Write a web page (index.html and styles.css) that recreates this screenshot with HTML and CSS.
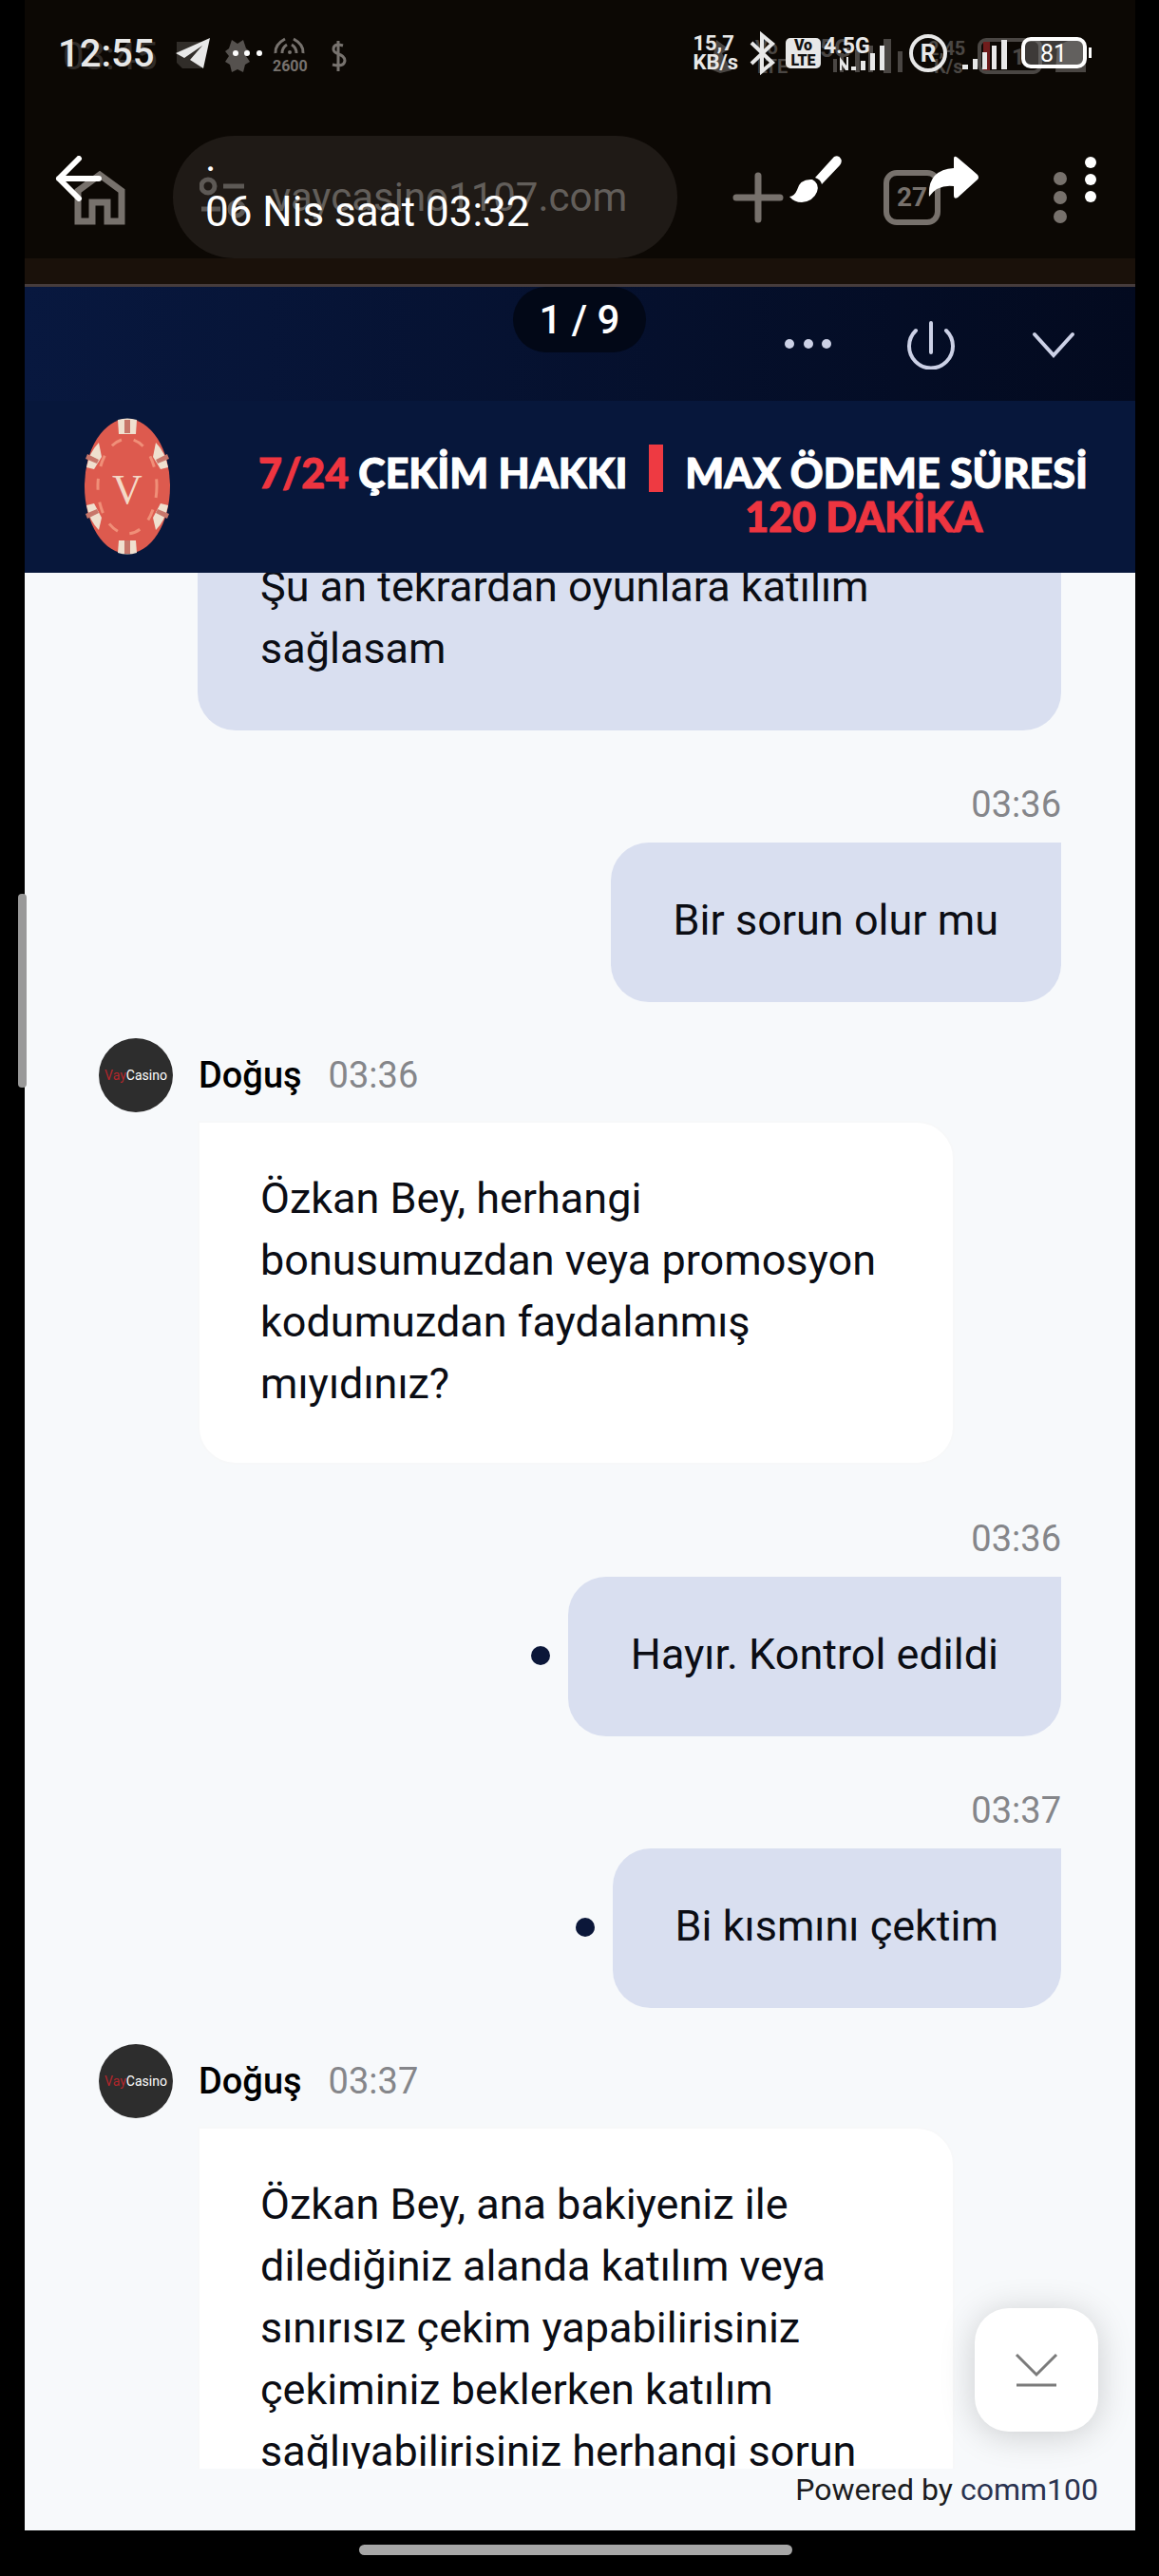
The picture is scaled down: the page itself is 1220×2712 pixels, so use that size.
FILE: index.html
```html
<!DOCTYPE html>
<html lang="tr">
  <head>
    <meta charset="UTF-8" />
    <meta name="viewport" content="width=device-width, initial-scale=1.0" />
    <title>06 Nis saat 03:32</title>
    <link rel="stylesheet" href="styles.css">
  </head>
  <body>
    <div class="photo">
      <!-- browser bar inside the photo -->
      <div class="browser">
        <div class="old-status">
          <svg width="340" height="60" viewBox="0 0 340 60" fill="#55514e">
            <text x="14" y="45" font-size="40" opacity="0.5">03:45</text>
            <path d="M134 16h26v28h-20l-6-6z" opacity="0.5" />
            <path d="M192 14l6 4 6-4 3 9 4 3-4 5 4 6-5 3-2 8-6-3-6 3-2-8-5-3 4-6-4-5 4-3z" />
            <g fill="none" stroke="#77726e" stroke-width="3">
              <path d="M238 28q-1-9 10-15M245 28q0-6 5-9M267 28q1-9-10-15M260 28q0-6-5-9" />
              <path d="M304 15v32M309 20q-10-3-10 4c0 6 12 4 12 12q-1 7-13 4" />
            </g>
            <circle cx="253" cy="27" r="2" fill="#77726e" />
            <text x="235" y="47" font-size="16" font-weight="700" fill="#77726e">2600</text>
          </svg>
          <svg width="440" height="60" viewBox="0 0 440 60" fill="#4a4643">
            <path d="M37 14l14 10-8 4 10 18-12 3-10-4z" />
            <text x="78" y="29" font-size="20" font-weight="700">Vo</text>
            <text x="80" y="49" font-size="20" font-weight="700">LTE</text>
            <text x="146" y="32" font-size="26" font-weight="700">5G</text>
            <path d="M160 34h4v14h-4zM167 28h4v20h-4zM183 24h5v24h-5zM197 20h5v28h-5zM213 13h8v36h-8zM228 26h5v22h-5z" />
            <text x="260" y="30" font-size="20" font-weight="700">2,45</text>
            <text x="266" y="49" font-size="20" font-weight="700">K/s</text>
            <rect x="314" y="14" width="64" height="34" rx="7" fill="none" stroke="#4a4643" stroke-width="4" />
            <path d="M318 16h7v30h-7z" fill="#701c1c" />
            <text x="348" y="40" font-size="24" font-weight="700">1</text>
            <path d="M396 20l18-8 12 6v30h-32z" />
          </svg>
        </div>
        <div class="address-row">
          <button class="ghost-btn" aria-label="Ana sayfa">
            <svg width="54" height="60" viewBox="0 0 54 60" fill="none" stroke="#77716c" stroke-width="7">
              <path d="M4 23L27 6l23 17v32H35V35H19v20H4z" />
            </svg>
          </button>
          <div class="address">
            <svg width="48" height="44" viewBox="0 0 48 44" fill="none" stroke="#5d5955" stroke-width="5">
              <circle cx="9" cy="10" r="7" />
              <path d="M25 10h22M2 34h20" />
              <circle cx="39" cy="34" r="7" />
            </svg>
            <span>vaycasino1107.com</span>
          </div>
          <button class="ghost-btn plus" aria-label="Yeni sekme">
            <svg width="54" height="54" viewBox="0 0 54 54" stroke="#77716c" stroke-width="7" stroke-linecap="round">
              <path d="M27 4v46M4 27h46" />
            </svg>
          </button>
          <button class="ghost-btn tabs">27</button>
          <button class="ghost-btn" aria-label="Menü">
            <svg width="16" height="54" viewBox="0 0 16 54" fill="#77716c">
              <circle cx="8" cy="7" r="7" /><circle cx="8" cy="27" r="7" /><circle cx="8" cy="47" r="7" />
            </svg>
          </button>
        </div>
      </div>
      <div class="browser-edge"></div>

      <header class="chat-header">
        <button aria-label="Diğer">
          <svg width="50" height="50" viewBox="0 0 50 50" fill="#ccd1e6">
            <circle cx="5" cy="25" r="5" /><circle cx="25" cy="25" r="5" /><circle cx="44" cy="25" r="5" />
          </svg>
        </button>
        <button aria-label="Kapat">
          <svg width="54" height="54" viewBox="0 0 54 54" fill="none" stroke="#ccd1e6" stroke-width="4" stroke-linecap="round">
            <path d="M11 13a23 23 0 1 0 32 0M27 5v31" />
          </svg>
        </button>
        <button aria-label="Küçült">
          <svg width="50" height="50" viewBox="0 0 50 50" fill="none" stroke="#ccd1e6" stroke-width="4" stroke-linecap="round">
            <path d="M5 15l20 22 20-22" />
          </svg>
        </button>
      </header>

      <div class="banner">
        <svg class="chip" width="92" height="144" viewBox="0 0 92 144">
          <ellipse cx="46" cy="72" rx="45" ry="71" fill="#dd5a4e" />
          <g fill="#efe0cf">
            <path d="M36 2q10-3 20 0l-1 15H37z" />
            <path d="M36 142q10 3 20 0l-1-13H37z" />
            <path d="M16 26l3 15-8 13-8-2q3-16 13-26z" />
            <path d="M76 26l-3 15 8 13 8-2q-3-16-13-26z" />
            <path d="M16 118l3-13-8-15-8 2q3 16 13 26z" />
            <path d="M76 118l-3-13 8-15 8 2q-3 16-13 26z" />
          </g>
          <path d="M43 2h6v14h-6zM43 129h6v14h-6zM4 38l12 6-2 4-12-5zM88 38l-12 6 2 4 12-5zM4 106l12-6-2-4-12 5zM88 106l-12-6 2-4 12 5z" fill="#c7766a" />
          <ellipse cx="46" cy="72" rx="31" ry="50" fill="none" stroke="#f08f78" stroke-width="3" stroke-dasharray="12 13" />
          <text x="46" y="90" font-size="44" text-anchor="middle" fill="#f4d9c6" class="chip-letter">V</text>
        </svg>
        <p class="banner-left"><b>7/24</b> ÇEKİM HAKKI</p>
        <i class="bar"></i>
        <p class="banner-right">MAX ÖDEME SÜRESİ<b>120 DAKİKA</b></p>
      </div>

      <main class="chat">
        <div class="messages">
          <div class="msg user">
            <p class="bubble wide">Şu an tekrardan oyunlara katılım sağlasam</p>
          </div>
          <div class="msg user">
            <div class="meta"><time>03:36</time></div>
            <p class="bubble">Bir sorun olur mu</p>
          </div>
          <div class="msg agent">
            <div class="meta">
              <span class="avatar"><b>Vay</b>Casino</span>
              <strong>Doğuş</strong>
              <time>03:36</time>
            </div>
            <p class="bubble">Özkan Bey, herhangi bonusumuzdan veya promosyon kodumuzdan faydalanmış mıyıdınız?</p>
          </div>
          <div class="msg user">
            <div class="meta"><time>03:36</time></div>
            <p class="bubble unread">Hayır. Kontrol edildi</p>
          </div>
          <div class="msg user">
            <div class="meta"><time>03:37</time></div>
            <p class="bubble unread">Bi kısmını çektim</p>
          </div>
          <div class="msg agent">
            <div class="meta">
              <span class="avatar"><b>Vay</b>Casino</span>
              <strong>Doğuş</strong>
              <time>03:37</time>
            </div>
            <p class="bubble">Özkan Bey, ana bakiyeniz ile dilediğiniz alanda katılım veya sınırısız çekim yapabilirisiniz çekiminiz beklerken katılım sağlıyabilirisiniz herhangi sorun</p>
          </div>
        </div>
      </main>
      <footer class="powered">
        Powered by <a href="#">comm100</a>
        <button class="to-bottom" aria-label="En alta in">
          <svg width="46" height="40" viewBox="0 0 46 40" fill="none" stroke="#7b7b7b" stroke-width="3">
            <path d="M2 4l21 21L44 4M2 36h42" />
          </svg>
        </button>
      </footer>
    </div>

    <div class="home-bar"><span></span></div>
    <div class="side-handle"></div>

    <!-- gallery viewer controls over the photo -->
    <div class="viewer">
      <div class="status">
        <span class="clock">12:55</span>
        <svg class="telegram" width="38" height="34" viewBox="0 0 38 34" fill="#e8e8e8">
          <path d="M37 1L1 17l9 5L29 9 16 24l14 9z" />
        </svg>
        <svg class="more" width="34" height="8" viewBox="0 0 34 8" fill="#fff">
          <circle cx="4" cy="4" r="3" /><circle cx="16" cy="4" r="3" /><circle cx="29" cy="4" r="3" />
        </svg>
        <span class="speed">15,7<br>KB/s</span>
        <svg width="28" height="48" viewBox="0 0 28 48" fill="none" stroke="#e8e8e8" stroke-width="4">
          <path d="M2 13l22 21-11 9V5l11 9L2 35" />
        </svg>
        <span class="volte">Vo<br>LTE</span>
        <svg width="68" height="44" viewBox="0 0 68 44" fill="#e8e8e8">
          <text x="0" y="22" font-size="23" font-weight="700">4.5G</text>
          <path d="M17 40V26l7 9V26h2v14h-3l-4-6v6zM29 36h5v4h-5zM39 30h5v10h-5zM49 22h5v18h-5zM59 14h5v26h-5z" />
        </svg>
        <svg class="roaming" width="40" height="44" viewBox="0 0 40 44">
          <circle cx="20" cy="22" r="18" fill="none" stroke="#e8e8e8" stroke-width="4" />
          <text x="20" y="31" font-size="26" font-weight="700" text-anchor="middle" fill="#e8e8e8">R</text>
        </svg>
        <svg class="signal" width="48" height="44" viewBox="0 0 48 44" fill="#e8e8e8">
          <path d="M0 34h6v5H0zM11 28h5v11h-5zM21 21h5v18h-5zM31 14h5v25h-5zM41 8h6v31h-6z" />
        </svg>
        <svg width="76" height="44" viewBox="0 0 76 44">
          <rect x="2" y="7" width="65" height="29" rx="8" fill="#8886" stroke="#fff" stroke-width="4" />
          <path d="M71 16h3v11h-3z" fill="#fff" />
          <text x="34" y="31" font-size="25" text-anchor="middle" fill="#fff">81</text>
        </svg>
      </div>
      <div class="toolbar">
        <button aria-label="Geri">
          <svg width="50" height="48" viewBox="0 0 50 48" fill="none" stroke="#fff" stroke-width="6" stroke-linecap="round" stroke-linejoin="round">
            <path d="M25 3L4 24l21 21M4 24h42" />
          </svg>
        </button>
        <div class="title">
          <span>.</span>
          <span>06 Nis saat 03:32</span>
        </div>
        <button class="brush" aria-label="Düzenle">
          <svg width="56" height="50" viewBox="0 0 56 50" fill="#fff">
            <path d="M47 1q5-2 7 2 2 3-1 7L34 30q-1-5-7-7z" />
            <path d="M24 25q8 4 5 13-4 10-16 11-8 0-13-6 5 0 8-7 3-12 16-11z" />
          </svg>
        </button>
        <button class="share" aria-label="Paylaş">
          <svg width="54" height="46" viewBox="0 0 54 46" fill="#fff">
            <path d="M27 3q0-4 4-1l21 18q2 3 0 5L31 44q-4 2-4-2V32Q10 30 1 43-1 15 27 13z" />
          </svg>
        </button>
        <button aria-label="Seçenekler">
          <svg width="14" height="50" viewBox="0 0 14 50" fill="#fff">
            <circle cx="7" cy="7" r="6" /><circle cx="7" cy="25" r="6" /><circle cx="7" cy="43" r="6" />
          </svg>
        </button>
      </div>
      <span class="counter">1 / 9</span>
    </div>
  </body>
</html>
```
FILE: styles.css
```css
* {
  box-sizing: border-box;
}

body {
  font-family: Roboto, sans-serif;
  background-color: #000;
  display: flex;
  flex-direction: column;
  height: 100vh;
  margin: 0;
  position: relative;
}

p {
  margin: 0;
}

button {
  background: none;
  border: none;
  padding: 0;
  font-family: inherit;
  display: flex;
  justify-content: center;
  align-items: center;
  cursor: pointer;
}

svg {
  display: block;
  flex: none;
}

.photo {
  flex: 1;
  min-height: 0;
  margin: 0 25px 0 26px;
  background-color: #f7f9fb;
  display: flex;
  flex-direction: column;
}

/* browser */
.browser {
  background-color: #0c0804;
}

.old-status {
  display: flex;
  justify-content: space-between;
  padding: 28px 38px 55px 26px;
}

.address-row {
  display: flex;
  align-items: center;
  padding: 0 71px 0 52px;
}

.address {
  flex: 1;
  display: flex;
  align-items: center;
  gap: 28px;
  margin: 0 58px 0 50px;
  padding: 0 28px;
  height: 129px;
  border-radius: 65px;
  background-color: #1f1a16;
  color: #625e5a;
  font-size: 42px;
}

.plus {
  margin-right: 105px;
}

.tabs {
  width: 60px;
  height: 58px;
  margin-right: 118px;
  border: 6px solid #77716c;
  border-radius: 14px;
  color: #77716c;
  font-size: 28px;
  font-weight: 700;
}

.browser-edge {
  height: 30px;
  background-color: #1a110a;
  border-bottom: 3px solid #463c3c;
}

/* chat header */
.chat-header {
  display: flex;
  justify-content: flex-end;
  gap: 49px;
  height: 120px;
  padding-right: 46px;
  background: linear-gradient(to right, #08183f, #030a1f);
}

.chat-header button {
  width: 80px;
}

.banner {
  display: flex;
  height: 181px;
  padding: 18px 50px 0 62px;
  background-color: #07173b;
  color: #fff;
  font-family: Lato, sans-serif;
  font-size: 43px;
  font-weight: 900;
  line-height: 46px;
  white-space: nowrap;
  -webkit-text-stroke: 1px;
}

.banner b {
  color: #ee3540;
  font-weight: 900;
}

.chip-letter {
  font-family: "Liberation Serif", serif;
  font-weight: 400;
}

.banner-left {
  margin-left: 92px;
  padding-top: 35px;
}

.bar {
  width: 15px;
  height: 50px;
  margin: 28px auto 0;
  background-color: #ee3a42;
}

.banner-right {
  padding-top: 35px;
}

.banner-right b {
  display: block;
  padding-right: 48px;
  text-align: center;
}

/* messages */
.chat {
  flex: 1;
  min-height: 0;
  overflow: hidden;
}

.messages {
  display: flex;
  flex-direction: column;
  gap: 38px;
  margin-top: -67px;
  padding: 0 78px;
}

.msg {
  display: flex;
  flex-direction: column;
}

.user {
  align-items: flex-end;
}

.agent {
  align-items: flex-start;
}

.meta {
  display: flex;
  align-items: center;
  height: 80px;
  font-size: 38px;
}

.agent .meta {
  height: 78px;
  margin-bottom: 9px;
}

.meta time {
  color: #85868a;
}

.meta strong {
  margin: 0 28px 0 27px;
  font-weight: 500;
}

.avatar {
  display: flex;
  justify-content: center;
  align-items: center;
  width: 78px;
  height: 78px;
  border-radius: 50%;
  background-color: #2d2d2d;
  color: #fff;
  font-size: 14px;
}

.avatar b {
  color: #b3262b;
  font-weight: 400;
}

.bubble {
  position: relative;
  padding: 49px 66px 54px;
  border-radius: 40px 0 40px 40px;
  background-color: #d9dff0;
  color: #0b0d14;
  font-size: 45px;
  line-height: 65px;
}

.wide {
  max-width: 909px;
}

.agent .bubble {
  width: 797px;
  margin-left: 104px;
  padding: 47px 64px 51px;
  border: 2px solid #f7f8f9;
  border-radius: 0 40px 40px 40px;
  background-color: #fff;
}

.unread::before {
  content: "";
  position: absolute;
  left: -39px;
  top: 73px;
  width: 20px;
  height: 20px;
  border-radius: 50%;
  background-color: #0b1739;
}

.powered {
  position: relative;
  height: 65px;
  padding-right: 39px;
  color: #1b1c20;
  font-size: 32px;
  line-height: 44px;
  text-align: right;
}

.powered a {
  color: #2a3350;
  text-decoration: none;
}

.to-bottom {
  position: absolute;
  right: 39px;
  bottom: 104px;
  width: 130px;
  height: 130px;
  border-radius: 36px;
  background-color: #fff;
  box-shadow: 0 4px 36px rgba(0, 0, 0, 0.18);
}

/* system edges */
.home-bar {
  display: flex;
  justify-content: center;
  height: 48px;
  padding: 15px 8px 0 0;
}

.home-bar span {
  width: 456px;
  height: 11px;
  border-radius: 6px;
  background-color: #a6a6a6;
}

.side-handle {
  position: absolute;
  left: 19px;
  top: 941px;
  width: 9px;
  height: 204px;
  border-radius: 4px;
  background-color: #999;
}

/* viewer overlay */
.viewer {
  position: absolute;
  top: 0;
  left: 0;
  right: 0;
  display: flex;
  flex-direction: column;
  align-items: center;
  color: #fff;
}

.status,
.toolbar {
  display: flex;
  align-self: stretch;
}

.status {
  align-items: center;
  height: 112px;
  padding: 0 69px 0 61px;
  color: #e8e8e8;
}

.clock {
  font-size: 40px;
  font-weight: 500;
}

.telegram {
  margin: 0 22px;
}

.more {
  margin-right: auto;
}

.speed {
  margin-right: 12px;
  font-size: 22px;
  font-weight: 700;
  line-height: 20px;
}

.volte {
  width: 37px;
  margin: 0 3px 0 10px;
  border-radius: 5px;
  background-color: #e8e8e8;
  color: #111;
  font-size: 16px;
  font-weight: 900;
  line-height: 16px;
  text-align: center;
}

.roaming {
  margin: 0 16px 0 22px;
}

.signal {
  margin-right: 14px;
}

.toolbar {
  align-items: flex-start;
  height: 190px;
  padding: 52px 65px 0 58px;
}

.title {
  flex: 1;
  display: flex;
  flex-direction: column;
  margin: -28px 0 0 108px;
  font-size: 44px;
  line-height: 58px;
}

.brush {
  margin-right: 90px;
}

.share {
  margin-right: 110px;
}

.counter {
  padding: 0 27px;
  border-radius: 35px;
  background-color: #020817;
  font-size: 42px;
  font-weight: 500;
  line-height: 69px;
}
```
